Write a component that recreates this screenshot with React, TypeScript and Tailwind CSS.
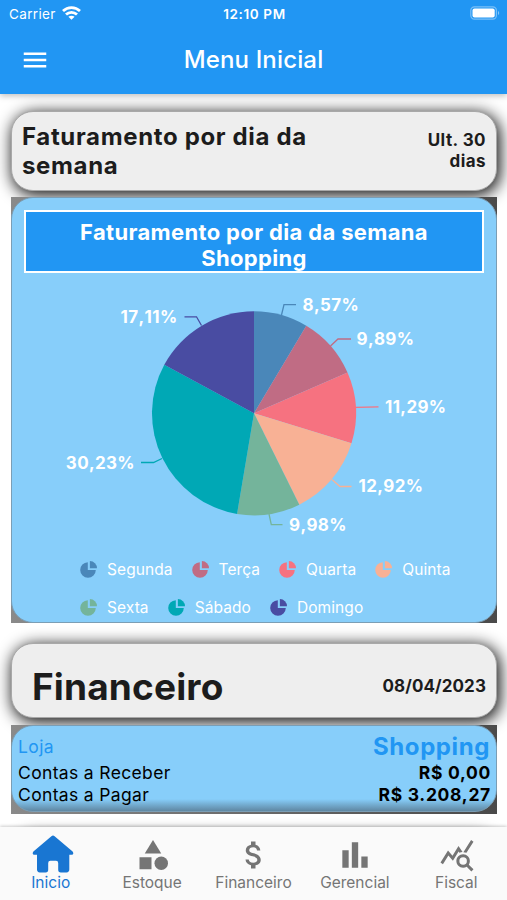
import type { ReactNode } from "react";
import { MdAttachMoney, MdBarChart, MdCategory, MdMenu, MdQueryStats } from "react-icons/md";

type Slice = {
  label: string;
  value: number;
  color: string;
  line: string;
  textX: number;
  textY: number;
  anchor: "start" | "end";
};

const CX = 230;
const CY = 137.3;
const RADIUS = 102;

const slices: Slice[] = [
  { label: "Segunda", value: 8.57, color: "#4a87b9", line: "257.5,39 260,28.7 272,28.7", textX: 278.5, textY: 35, anchor: "start" },
  { label: "Terça", value: 9.89, color: "#c06c84", line: "306.5,70 314,63 327,63", textX: 332.5, textY: 69, anchor: "start" },
  { label: "Quarta", value: 11.29, color: "#f67280", line: "331.5,131.4 354.5,130.9", textX: 361, textY: 137, anchor: "start" },
  { label: "Quinta", value: 12.92, color: "#f8b195", line: "308,203.5 316,210.5 327.5,210.5", textX: 334.5, textY: 216, anchor: "start" },
  { label: "Sexta", value: 9.98, color: "#74b49b", line: "245,238 247.3,248.7 258.5,248.7", textX: 265, textY: 254.5, anchor: "start" },
  { label: "Sábado", value: 30.23, color: "#00a8b5", line: "138,182.5 129.5,186.5 117,186.5", textX: 111, textY: 193, anchor: "end" },
  { label: "Domingo", value: 17.11, color: "#494ca2", line: "177.5,49.5 172.5,40.8 160.5,40.8", textX: 153.5, textY: 47, anchor: "end" },
];

const total = slices.reduce((sum, slice) => sum + slice.value, 0);

function point(ratio: number) {
  const angle = ratio * 2 * Math.PI;
  return `${CX + RADIUS * Math.sin(angle)} ${CY - RADIUS * Math.cos(angle)}`;
}

function formatPercent(value: number) {
  return `${value.toFixed(2).replace(".", ",")}%`;
}

function PieChart() {
  let start = 0;

  return (
    <svg viewBox="0 0 460 270" className="block h-[270px] w-[460px]">
      {slices.map((slice) => {
        const end = start + slice.value / total;
        const path = `M${CX} ${CY} L${point(start)} A${RADIUS} ${RADIUS} 0 0 1 ${point(end)} Z`;
        start = end;

        return (
          <g key={slice.label}>
            <path d={path} fill={slice.color} />
            <polyline points={slice.line} fill="none" stroke={slice.color} strokeWidth="1.3" />
            <text x={slice.textX} y={slice.textY} textAnchor={slice.anchor} className="fill-white text-[17px] font-bold tracking-[0.35px] [font-kerning:none]">
              {formatPercent(slice.value)}
            </text>
          </g>
        );
      })}
    </svg>
  );
}

function LegendItem({ label, color }: { label: string; color: string }) {
  return (
    <div className="flex items-center">
      <svg viewBox="0 0 17 17" className="mr-[10px] h-[17px] w-[17px]" fill={color}>
        <path d="M7.8 1.2 V9.1 H15.8 A7.8 7.8 0 1 1 7.8 1.2 Z" />
        <path d="M9.9 0.1 A7.2 7.2 0 0 1 17 7.3 H9.9 Z" />
      </svg>
      <span className="text-[15.5px] leading-[19px] tracking-[0.08px] text-white">{label}</span>
    </div>
  );
}

function HeaderCard({ className, children }: { className: string; children: ReactNode }) {
  return (
    <section className={`flex items-center justify-between rounded-[22px] border border-[#a8a8a8] bg-[#eeeeee] text-[#1c1c1c] shadow-[2px_3px_16px_1px_rgba(0,0,0,0.95)] ${className}`}>
      {children}
    </section>
  );
}

function StatusBar() {
  return (
    <div className="grid h-7 grid-cols-3 items-center pl-[9px] pr-[7px] text-white">
      <div className="flex items-center gap-[6px]">
        <span className="text-[13.5px] tracking-[0.35px]">Carrier</span>
        <svg viewBox="0 0 19 14" className="-mt-[2px] h-[14px] w-[19px]" fill="none" stroke="white" strokeWidth="2.8">
          <path d="M1 5 C5.8 0.4 13.2 0.4 18 5" />
          <path d="M4 8.6 C7.2 5.5 11.8 5.5 15 8.6" />
          <path d="M9.5 13.8 L6.4 10.8 C8.2 9.3 10.8 9.3 12.6 10.8 Z" fill="white" stroke="none" />
        </svg>
      </div>
      <span className="text-center text-[13.5px] font-semibold tracking-[0.6px] [font-kerning:none]">12:10 PM</span>
      <svg viewBox="0 0 30 14" className="-mt-[2px] h-[14px] w-[30px] justify-self-end">
        <rect x="0.8" y="0.8" width="25.6" height="12.4" rx="3.6" fill="none" stroke="white" strokeOpacity="0.4" strokeWidth="1.2" />
        <rect x="2.5" y="2.5" width="22.2" height="9" rx="2" fill="white" />
        <path d="M28 5 V9 C29.6 8.4 29.6 5.6 28 5 Z" fill="white" fillOpacity="0.45" />
      </svg>
    </div>
  );
}

function HomeIcon() {
  return (
    <svg viewBox="0 0 42 38" className="ml-[5px] h-[38px] w-[42px]" fill="#1976d2">
      <path d="M19.4 1.2 Q21 0 22.6 1.2 L40.6 16.6 Q42.4 19.4 39.6 19.8 H37.3 V34.6 Q37.3 37.4 34.5 37.4 H28.8 Q26.2 37.4 26.2 34.8 V28 Q26.2 25.8 24 25.8 H18.4 Q16.2 25.8 16.2 28 V34.8 Q16.2 37.4 13.6 37.4 H7.8 Q5 37.4 5 34.6 V19.8 H2.4 Q-0.4 19.4 1.4 16.6 Z" />
    </svg>
  );
}

const navItems = [
  { label: "Inicio", icon: <HomeIcon /> },
  { label: "Estoque", icon: <MdCategory className="mt-[2px] ml-[2px] size-[36px]" /> },
  { label: "Financeiro", icon: <MdAttachMoney className="mt-[2px] ml-[1px] size-[36px]" /> },
  { label: "Gerencial", icon: <MdBarChart className="mt-[1px] size-[38px]" /> },
  { label: "Fiscal", icon: <MdQueryStats className="mt-[2px] ml-[1px] size-[36px]" /> },
];

export default function App() {
  return (
    <div className="flex h-[900px] w-[507px] flex-col overflow-hidden bg-white font-['Inter',sans-serif]">
      <header className="relative z-10 h-[94px] shrink-0 bg-[#2196f3] shadow-[0_2px_6px_rgba(0,0,0,0.25)]">
        <StatusBar />
        <div className="grid h-[64px] grid-cols-[70px_1fr_70px] items-center text-white">
          <MdMenu className="ml-[20px] size-[30px]" />
          <h1 className="text-center text-[24px] font-medium tracking-[0.15px]">Menu Inicial</h1>
        </div>
      </header>

      <main className="flex h-[733px] shrink-0 flex-col overflow-hidden pl-[11px] pr-[10px] pt-[17px]">
        <HeaderCard className="h-[80px] shrink-0 px-[10px]">
          <h2 className="w-[320px] text-[24px] font-bold leading-[29px] tracking-[0.65px]">Faturamento por dia da semana</h2>
          <p className="w-[70px] text-right text-[17px] font-bold leading-[21px] tracking-[0.45px]">Ult. 30 dias</p>
        </HeaderCard>

        <div className="relative z-[1] mt-[6px] h-[426px] shrink-0 overflow-hidden bg-gradient-to-r from-[#8a8a8a] to-[#4a4a4a]">
          <section className="h-full rounded-[22px] border border-[#7b9eb5] bg-[#87cefa] px-[12px] pt-[12px]">
            <div className="h-[63px] border-[2.5px] border-white bg-[#2196f3] pt-[7px] text-center text-[22px] font-bold leading-[26px] tracking-[0.35px] text-white">
              Faturamento por dia da semana
              <br />
              Shopping
            </div>
            <div className="mt-[3px]">
              <PieChart />
            </div>
            <div className="ml-[56px] mt-[14px] flex w-[390px] flex-wrap gap-x-[19px] gap-y-[19px]">
              {slices.map((slice) => (
                <LegendItem key={slice.label} label={slice.label} color={slice.color} />
              ))}
            </div>
          </section>
        </div>

        <HeaderCard className="mt-[20px] h-[75px] shrink-0 pl-[20px] pr-[10px]">
          <h2 className="pt-[12px] text-[37px] font-bold leading-[44px] tracking-[0.15px]">Financeiro</h2>
          <p className="pt-[12px] text-[17px] font-bold tracking-[0.1px]">08/04/2023</p>
        </HeaderCard>

        <div className="relative z-[1] mt-[7px] h-[89px] shrink-0 overflow-hidden bg-gradient-to-r from-[#8a8a8a] to-[#4a4a4a]">
          <section className="h-[87px] rounded-[22px] border border-[#7b9eb5] bg-[linear-gradient(to_top,#5f87a2,#87cefa_12px)] pl-[6px] pr-[7px] pt-[6px] text-[17px] text-black">
            <div className="flex h-[30px] items-center justify-between text-[#2196f3]">
              <span className="text-[17.5px] tracking-[0.4px]">Loja</span>
              <span className="-mr-px text-[24px] font-bold tracking-[0.6px]">Shopping</span>
            </div>
            <div className="flex h-[22px] items-center justify-between">
              <span className="text-[17.5px] tracking-[0.35px]">Contas a Receber</span>
              <span className="-mr-[2px] text-[17.5px] font-bold tracking-[0.7px]">R$ 0,00</span>
            </div>
            <div className="flex h-[22px] items-center justify-between">
              <span className="text-[17.5px] tracking-[0.35px]">Contas a Pagar</span>
              <span className="-mr-[2px] text-[17.5px] font-bold tracking-[0.7px]">R$ 3.208,27</span>
            </div>
          </section>
        </div>

        <HeaderCard className="mt-[20px] h-[75px] shrink-0">{null}</HeaderCard>
      </main>

      <nav className="relative z-10 grid h-[73px] shrink-0 grid-cols-5 bg-[#fafafa] shadow-[0_-1px_3px_rgba(0,0,0,0.2)]">
        {navItems.map((item, index) => (
          <div key={item.label} className={`flex flex-col items-center pt-[8px] ${index === 0 ? "text-[#1976d2]" : "text-[#757575]"}`}>
            <div className="flex h-[38px] items-center justify-center">{item.icon}</div>
            <span className="mt-px text-[15.5px] leading-[18px]">{item.label}</span>
          </div>
        ))}
      </nav>
    </div>
  );
}
